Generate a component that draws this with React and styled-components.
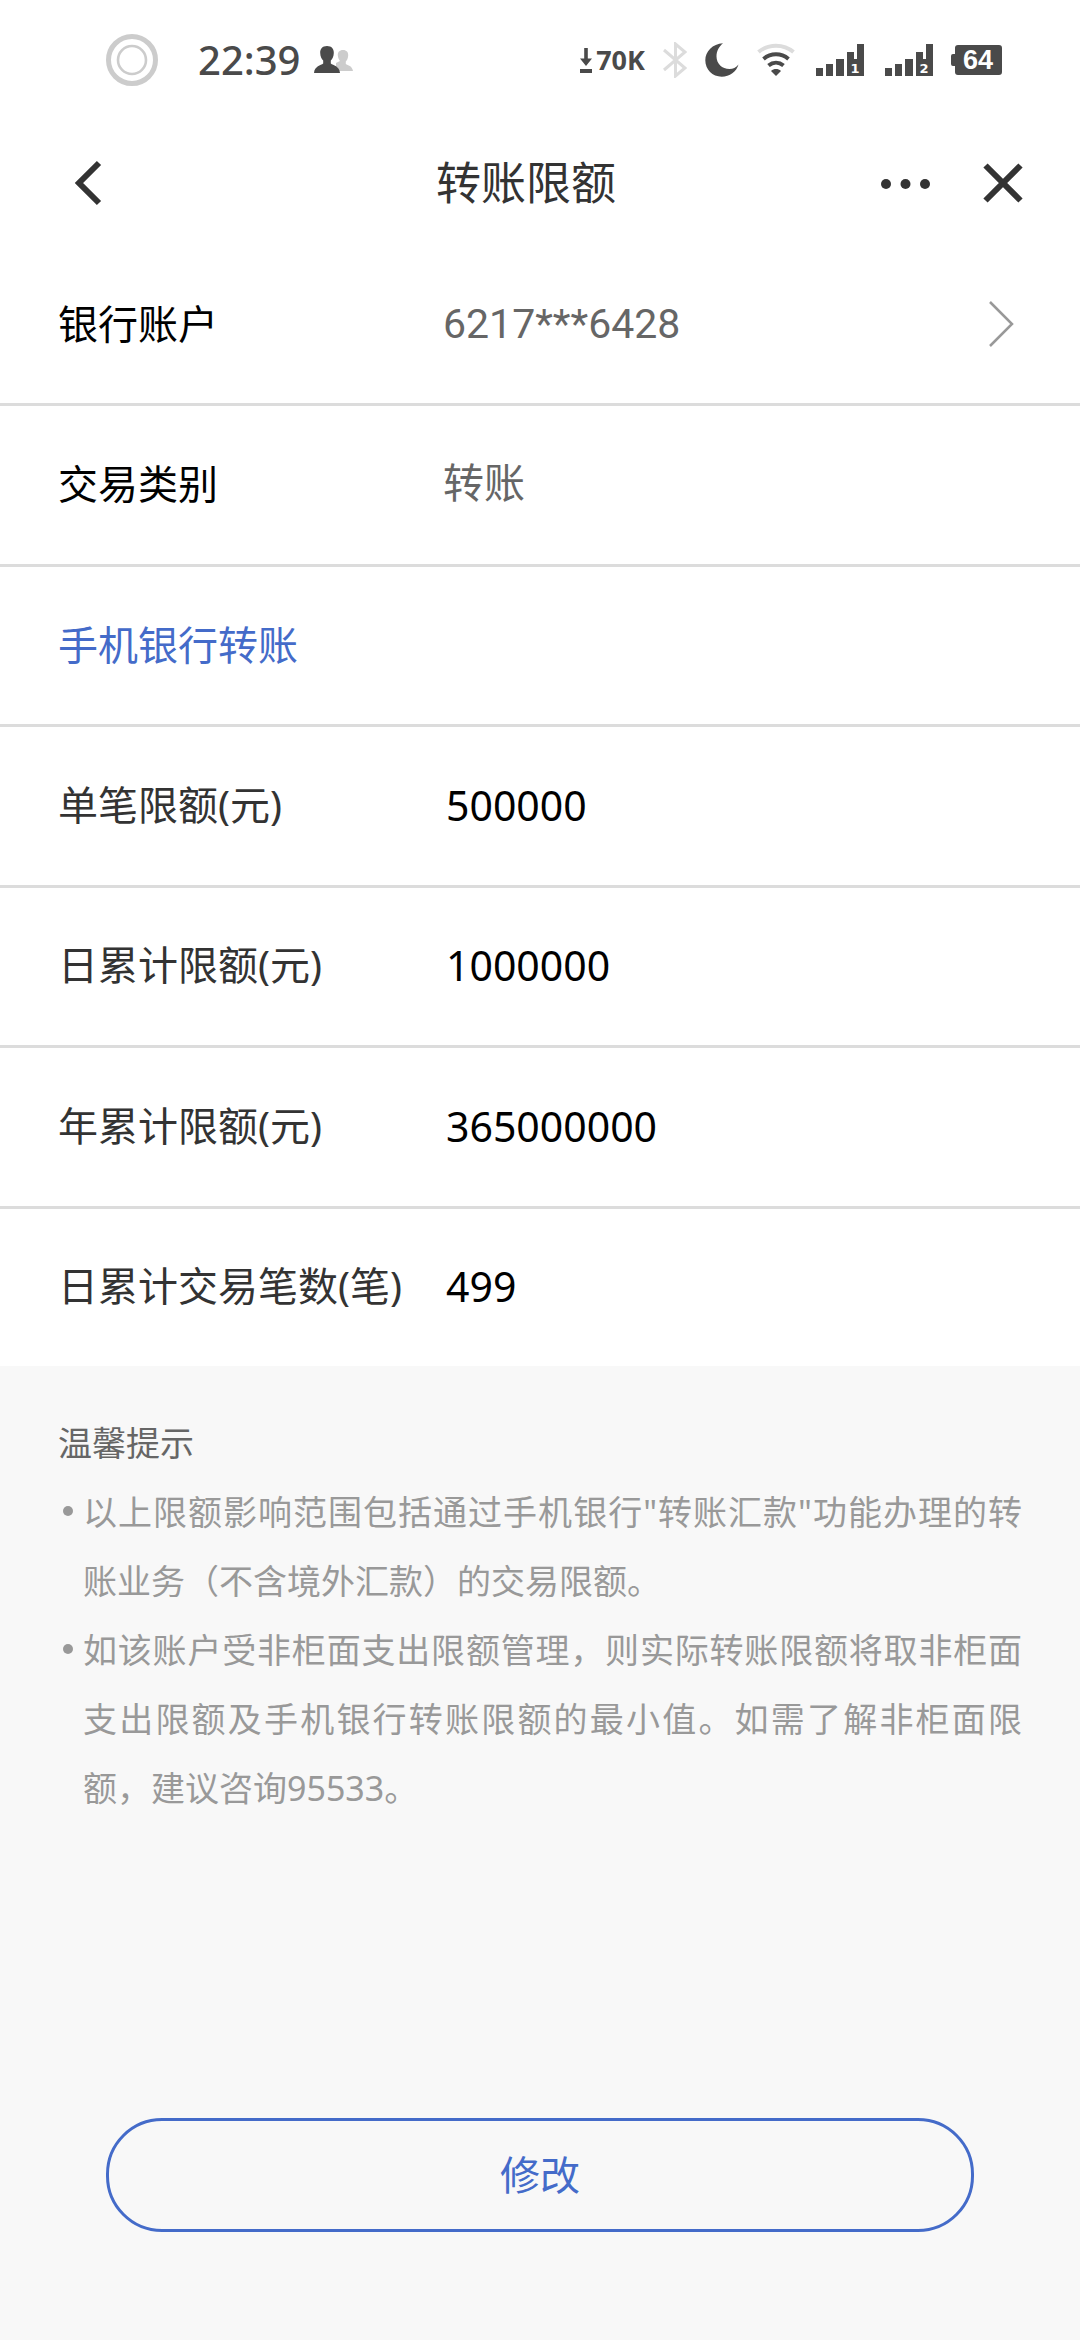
import { useId } from "react";
import styled, { createGlobalStyle } from "styled-components";

const cores = {
    texto: "#333333",
    preto: "#000000",
    cinza: "#666666",
    cinzaClaro: "#999999",
    linha: "#dcdcdc",
    azul: "#446bc9",
    fundo: "#f8f8f8",
    status: "#4a4a4a",
    statusClaro: "#cccccc",
}

const GlobalStyle = createGlobalStyle`
    * {
        box-sizing: border-box;
    }

    body {
        margin: 0;
        background: ${cores.fundo};
        font-family: "Noto Sans", "Noto Sans CJK SC", sans-serif;
        color: ${cores.texto};
    }

    button, input {
        font: inherit;
        color: inherit;
        background: none;
        border: 0;
        padding: 0;
        margin: 0;
    }

    svg {
        display: block;
        flex: none;
    }
`

const Page = styled.div`
    min-height: 100vh;
    display: flex;
    flex-direction: column;
`

const StatusBar = styled.div`
    display: flex;
    justify-content: space-between;
    align-items: center;
    height: 120px;
    padding: 0 78px 0 106px;
    background: #fff;
    color: ${cores.status};
`

const StatusGroup = styled.div`
    display: flex;
    align-items: center;
    gap: ${({ $gap }) => $gap}px;
`

const Clock = styled.time`
    font-size: 40px;
    line-height: 40px;
    font-weight: 500;
    margin-left: 26px;
`

const Speed = styled.span`
    display: flex;
    align-items: center;
    gap: 4px;
    font-size: 27px;
    line-height: 40px;
    font-weight: 700;
`

const Header = styled.header`
    display: grid;
    grid-template-columns: 100px 1fr 142px;
    align-items: center;
    height: 126px;
    padding: 0 57px 0 71px;
    background: #fff;
`

const Title = styled.h1`
    margin: 0;
    font-size: 45px;
    line-height: 60px;
    font-weight: 400;
    text-align: center;
`

const Actions = styled.div`
    display: flex;
    justify-content: space-between;
    align-items: center;
`

const IconButton = styled.button`
    display: flex;
    align-items: center;
    justify-self: start;
    cursor: pointer;
`

const List = styled.div`
    display: flex;
    flex-direction: column;
    min-height: 1120px;
    background: #fff;
`

const Row = styled.div`
    flex: 1 0 auto;
    display: flex;
    align-items: center;
    width: 100%;
    padding: 40px 66px 42px 58px;
    border-bottom: 3px solid ${cores.linha};
    font-size: 40px;
    line-height: 60px;
    text-align: left;

    &:last-child {
        border-bottom: 0;
    }
`

const SectionTitle = styled.h2`
    margin: 0;
    font-size: 40px;
    font-weight: 400;
    color: ${cores.azul};
`

const Label = styled.span`
    flex: 0 0 385px;
    color: ${({ $forte }) => $forte ? cores.preto : cores.texto};
`

const Value = styled.span`
    flex: 1;
    font-family: Roboto, "Noto Sans CJK SC", sans-serif;
    font-size: 41px;
    color: ${cores.cinza};
`

const Field = styled.input`
    flex: 1;
    min-width: 0;
    height: 60px;
    padding: 0 3px;
    font-size: 41px;
    color: ${cores.preto};
    outline: none;
`

const Tips = styled.section`
    padding: 43px 58px 0;
    font-size: 34px;
    line-height: 69px;
    color: ${cores.cinzaClaro};
`

const TipsTitle = styled.h3`
    margin: 0;
    font-size: 34px;
    font-weight: 400;
    color: ${cores.cinza};
`

const TipsList = styled.ul`
    margin: 0;
    padding: 0;
    list-style: none;
`

const Tip = styled.li`
    display: flex;
    gap: 10px;
    padding-left: 5px;
    text-align: justify;

    &::before {
        content: "";
        flex: none;
        width: 10px;
        height: 10px;
        margin-top: 28px;
        border-radius: 50%;
        background: ${cores.cinzaClaro};
    }
`

const Footer = styled.footer`
    margin-top: auto;
    padding: 40px 106px 108px;
`

const EditButton = styled.button`
    width: 100%;
    padding: 24px 0;
    border: 3px solid ${cores.azul};
    border-radius: 56px;
    font-size: 40px;
    line-height: 60px;
    color: ${cores.azul};
    cursor: pointer;
`

const RingIcon = () => (
    <svg width="52" height="52" viewBox="0 0 52 52" fill="none" stroke={cores.statusClaro}>
        <circle cx="26" cy="26" r="23.5" strokeWidth="5" />
        <circle cx="26" cy="26" r="14" strokeWidth="2.6" />
    </svg>
)

const PeopleIcon = () => (
    <svg width="40" height="28" viewBox="0 0 40 28">
        <path fill={cores.statusClaro} d="M29 4c3.600 0 5.400 2.400 5.200 5.400-.2 3-1.200 4.800-2.400 6v2.600c2 1.400 6.400 1.800 7.200 7H22V17l4-2c-1.200-1.600-2-3.600-2.200-5.600C23.600 6.400 25.400 4 29 4z" />
        <path fill={cores.status} d="M13 0c4.600 0 7 2.800 6.800 7-.1 3.400-1.400 6-3 7.600v3c2.400 2 8.600 2.400 9.200 9.400H0c.6-7 6.800-7.400 9.200-9.400v-3C7.600 13 6.300 10.400 6.200 7 6 2.800 8.400 0 13 0z" />
    </svg>
)

const DownIcon = () => (
    <svg width="12" height="25" viewBox="0 0 12 25" fill={cores.status}>
        <path d="M4.200 0h3.600v10.500H12L6 18 0 10.500h4.200zM0 21h12v4H0z" />
    </svg>
)

const BluetoothIcon = () => (
    <svg width="24" height="36" viewBox="0 0 24 36" fill="none" stroke="#dcdcdc" strokeWidth="3">
        <path d="M1 8l21 18-9.500 8V2L22 10 1 28" />
    </svg>
)

const MoonIcon = () => (
    <svg width="34" height="34" viewBox="0 0 34 34" fill={cores.status}>
        <path d="M18 .3C7.500 1 .3 8.500.3 17.300.3 26.500 7.500 33.700 16.700 33.700c8 0 14.800-5 16.800-12.200C31 24.500 28 26 24.500 26 17 26 11.500 20.500 11.500 13.500c0-5.500 2.500-10 6.500-13.200z" />
    </svg>
)

const WifiIcon = () => (
    <svg width="38" height="34" viewBox="0 0 38 34" fill="none" stroke={cores.status} strokeWidth="4">
        <path stroke="#dcdcdc" d="M1.500 9C11.500.5 26.500.5 36.500 9" />
        <path d="M6.500 16c7.500-6.200 17.500-6.200 25 0" />
        <path d="M11.500 22.500c4.500-3.700 10.500-3.700 15 0" />
        <path fill={cores.status} stroke="none" d="M19 33l-5-5c3-2.600 7-2.600 10 0z" />
    </svg>
)

const SignalIcon = ({ sim }) => (
    <svg width="48" height="32" viewBox="0 0 48 32" fill={cores.status}>
        <path d="M0 24h7v8H0zM10 20h7v12h-7zM20 15h8v17h-8zM31 8h7v7h3V0h7v32H31z" />
        <text x="39" y="29" textAnchor="middle" fontFamily="DejaVu Sans, sans-serif" fontWeight="700" fontSize="13" fill="#fff">{sim}</text>
    </svg>
)

const BatteryIcon = ({ level }) => (
    <svg width="51" height="30" viewBox="0 0 51 30" fill={cores.status}>
        <path d="M7 0h41a3 3 0 0 1 3 3v24a3 3 0 0 1-3 3H7a3 3 0 0 1-3-3v-6H2a2 2 0 0 1-2-2v-8a2 2 0 0 1 2-2h2V3a3 3 0 0 1 3-3z" />
        <text x="27" y="24" textAnchor="middle" fontFamily="Liberation Sans, sans-serif" fontWeight="700" fontSize="27" fill="#fff">{level}</text>
    </svg>
)

const BackIcon = () => (
    <svg width="32" height="46" viewBox="0 0 32 46" fill="none" stroke={cores.texto} strokeWidth="6">
        <path d="M28 3L8 23l20 20" />
    </svg>
)

const MoreIcon = () => (
    <svg width="49" height="12" viewBox="0 0 49 12" fill={cores.texto}>
        <circle cx="5" cy="7" r="5" />
        <circle cx="24.500" cy="7" r="5" />
        <circle cx="44" cy="7" r="5" />
    </svg>
)

const CloseIcon = () => (
    <svg width="40" height="40" viewBox="0 0 40 40" fill="none" stroke={cores.texto} strokeWidth="6">
        <path d="M2.500 2.500l35 35M37.500 2.500l-35 35" />
    </svg>
)

const ChevronIcon = () => (
    <svg width="26" height="46" viewBox="0 0 26 46" fill="none" stroke={cores.cinzaClaro} strokeWidth="2.500">
        <path d="M2 1l22 22L2 45" />
    </svg>
)

const limites = [
    { nome: "单笔限额(元)", valor: "500000" },
    { nome: "日累计限额(元)", valor: "1000000" },
    { nome: "年累计限额(元)", valor: "365000000" },
    { nome: "日累计交易笔数(笔)", valor: "499" },
]

const dicas = [
    "以上限额影响范围包括通过手机银行\"转账汇款\"功能办理的转账业务（不含境外汇款）的交易限额。",
    "如该账户受非柜面支出限额管理，则实际转账限额将取非柜面支出限额及手机银行转账限额的最小值。如需了解非柜面限额，建议咨询95533。",
]

const LimitRow = ({ nome, valor }) => {
    const id = useId();

    return (
        <Row>
            <Label as="label" htmlFor={id}>{nome}</Label>
            <Field id={id} type="text" value={valor} readOnly />
        </Row>
    )
}

const App = () => {
    return (
        <Page lang="zh-CN">
            <GlobalStyle />
            <StatusBar>
                <StatusGroup $gap={14}>
                    <RingIcon />
                    <Clock>22:39</Clock>
                    <PeopleIcon />
                </StatusGroup>
                <StatusGroup $gap={18}>
                    <Speed><DownIcon />70K</Speed>
                    <BluetoothIcon />
                    <MoonIcon />
                    <StatusGroup $gap={21}>
                        <WifiIcon />
                        <SignalIcon sim="1" />
                        <SignalIcon sim="2" />
                    </StatusGroup>
                    <BatteryIcon level="64" />
                </StatusGroup>
            </StatusBar>
            <Header>
                <IconButton type="button" aria-label="返回"><BackIcon /></IconButton>
                <Title>转账限额</Title>
                <Actions>
                    <IconButton type="button" aria-label="更多"><MoreIcon /></IconButton>
                    <IconButton type="button" aria-label="关闭"><CloseIcon /></IconButton>
                </Actions>
            </Header>
            <main>
                <List>
                    <Row as="button" type="button">
                        <Label $forte>银行账户</Label>
                        <Value>6217***6428</Value>
                        <ChevronIcon />
                    </Row>
                    <Row>
                        <Label $forte>交易类别</Label>
                        <Value>转账</Value>
                    </Row>
                    <Row>
                        <SectionTitle>手机银行转账</SectionTitle>
                    </Row>
                    {limites.map(limite => <LimitRow key={limite.nome} {...limite} />)}
                </List>
                <Tips>
                    <TipsTitle>温馨提示</TipsTitle>
                    <TipsList>
                        {dicas.map(dica => <Tip key={dica}>{dica}</Tip>)}
                    </TipsList>
                </Tips>
            </main>
            <Footer>
                <EditButton type="button">修改</EditButton>
            </Footer>
        </Page>
    )
}

export default App;
